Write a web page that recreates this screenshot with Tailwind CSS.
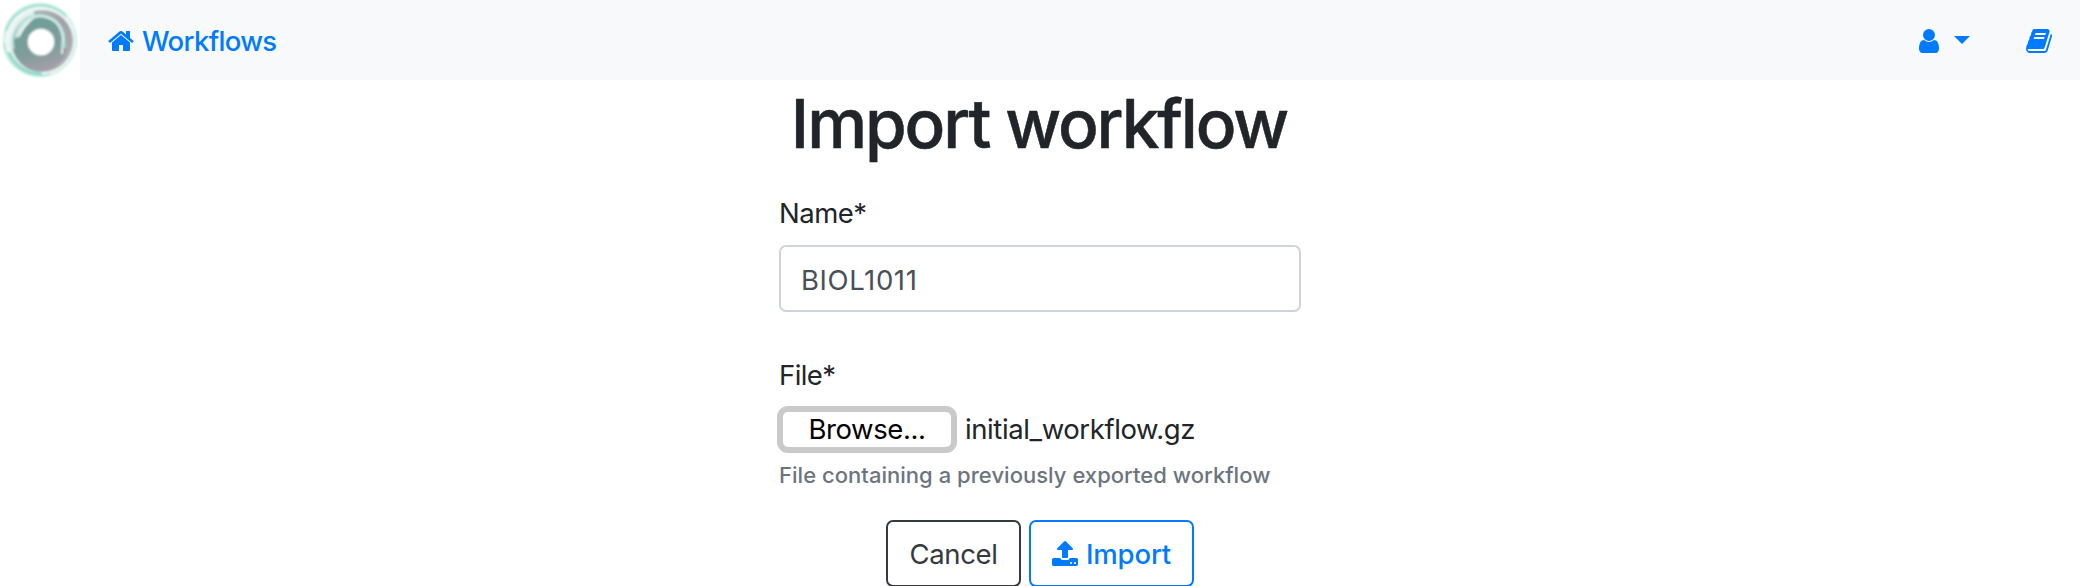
<!DOCTYPE html>
<html lang="en">
<head>
<meta charset="utf-8">
<title>Import workflow</title>
<script src="https://cdn.jsdelivr.net/npm/@tailwindcss/browser@4"></script>
</head>
<body class="h-[586px] overflow-hidden bg-white font-[Inter,sans-serif] text-[27.5px] leading-[42px] text-[#212529]">
<nav class="flex h-20 items-center bg-[#f8f9fa] text-[#007bff]">
  <a class="h-20 w-20 shrink-0 bg-white" href="#">
    <svg class="h-20 w-20" viewBox="0 0 80 80" fill="none">
      <defs>
        <linearGradient id="disc" x1="0.3" y1="0" x2="0.6" y2="1"><stop offset="0" stop-color="#6f9f99"/><stop offset=".6" stop-color="#7e9d9b"/><stop offset="1" stop-color="#a5a0a9"/></linearGradient>
        <linearGradient id="arc" x1="0" y1="0" x2="1" y2="1"><stop offset="0" stop-color="#a9c9c2"/><stop offset=".5" stop-color="#a39fa9"/><stop offset="1" stop-color="#b5b2ba"/></linearGradient>
        <filter id="soft" x="-10%" y="-10%" width="120%" height="120%"><feGaussianBlur stdDeviation=".9"/></filter>
      </defs>
      <g filter="url(#soft)">
        <circle cx="40" cy="40" r="36" fill="#f2f8f7" stroke="#d3f0e8" stroke-width="2.5"/>
        <path d="M6 31A36 36 0 0 1 66 16" stroke="#a9e2d4" stroke-width="3"/>
        <path d="M4 43A36 36 0 0 0 50 74" stroke="#b4e8db" stroke-width="2.5"/>
        <circle cx="42" cy="41" r="31" fill="url(#arc)"/>
        <path d="M11 48A31 31 0 0 1 34 13" stroke="#e3f1ee" stroke-width="4"/>
        <path d="M9 52Q18 73 42 74" stroke="#8bd9c7" stroke-width="3"/>
        <circle cx="40" cy="44.5" r="27" fill="url(#disc)"/>
        <path d="M14 49A27 27 0 0 1 40 15Q66 17 65 48" stroke="#a5dccf" stroke-width="2"/>
        <path d="M16 38Q20 19 39 16Q60 17 63 38L62 54" stroke="#d8efe9" stroke-width="2.2"/>
        <path d="M18 35Q22 22 35 18Q25 25 19 38Z" fill="#effaf7"/>
        <circle cx="41" cy="42" r="13.3" fill="#fff"/>
      </g>
    </svg>
  </a>
  <a class="flex items-center pl-[27px]" href="#">
    <svg class="h-7 w-7 translate-y-px" viewBox="0 0 1792 1792" fill="currentColor"><path d="M1472 992v480q0 26-19 45t-45 19h-384v-384h-256v384h-384q-26 0-45-19t-19-45v-480q0-1 .5-3t.5-3l575-474 575 474q1 2 1 6zm223-69l-62 74q-8 9-21 11h-3q-13 0-21-7l-692-577-692 577q-12 8-24 7-13-2-21-11l-62-74q-8-10-7-23.5t11-21.5l719-599q32-26 76-26t76 26l244 204v-195q0-14 9-23t23-9h192q14 0 23 9t9 23v408l219 182q10 8 11 21.5t-7 23.5z"/></svg>
    <span class="ml-[7px] mt-0.5 font-medium tracking-[-0.65px]">Workflows</span>
  </a>
  <div class="ml-auto flex items-center pr-[27px]">
    <a class="flex items-center gap-[11px]" href="#">
      <svg class="h-7 w-7 translate-y-px" viewBox="0 0 1792 1792" fill="currentColor"><path d="M1536 1399q0 109-62.5 187t-150.5 78h-854q-88 0-150.5-78t-62.5-187q0-85 8.5-160.5t31.5-152 58.5-131 94-89 134.5-34.5q131 128 313 128t313-128q76 0 134.5 34.5t94 89 58.5 131 31.5 152 8.5 160.5zm-256-887q0 159-112.5 271.5t-271.5 112.5-271.5-112.5-112.5-271.5 112.5-271.5 271.5-112.5 271.5 112.5 112.5 271.5z"/></svg>
      <svg class="h-2 w-4" viewBox="0 0 16 8" fill="currentColor"><path d="M0 0h16L8 8z"/></svg>
    </a>
    <a class="ml-[55px]" href="#"><svg class="h-7 w-7 translate-y-px" viewBox="0 0 1792 1792" fill="currentColor"><path d="M1703 478q40 57 18 129l-275 906q-19 64-76.5 107.5t-122.5 43.5h-923q-77 0-148.5-53.5t-99.5-131.5q-24-67-2-127 0-4 3-27t4-37q1-8-3-21.5t-3-19.5q2-11 8-21t16.5-23.5 16.5-23.5q23-38 45-91.5t30-91.5q3-10 .5-30t-.5-28q3-11 17-28t17-23q21-36 42-92t25-90q1-9-2.5-32t.5-28q4-13 22-30.5t22-22.5q19-26 42.5-84.5t27.5-96.5q1-8-3-25.5t-2-26.5q2-8 9-18t18-23 17-21q8-12 16.5-30.5t15-35 16-36 19.5-32 26.5-23.5 36-11.5 47.5 5.5l-1 3q38-9 51-9h761q74 0 114 56t18 130l-274 906q-36 119-71.5 153.5t-128.5 34.5h-869q-27 0-38 15-11 16-1 43 24 70 144 70h923q29 0 56-15.5t35-41.5l300-987q7-22 5-57 38 15 59 43zm-1064 2q-4 13 2 22.5t20 9.5h608q13 0 25.5-9.5t16.5-22.5l21-64q4-13-2-22.5t-20-9.5h-608q-13 0-25.5 9.5t-16.5 22.5zm-83 256q-4 13 2 22.5t20 9.5h608q13 0 25.5-9.5t16.5-22.5l21-64q4-13-2-22.5t-20-9.5h-608q-13 0-25.5 9.5t-16.5 22.5z"/></svg></a>
  </div>
</nav>
<main class="flex flex-col items-center">
  <h1 class="mt-0.5 h-[84px] -translate-x-px whitespace-nowrap text-[67.5px] leading-[84px] font-medium tracking-[-2.1px] [-webkit-text-stroke:0.5px_currentColor]">Import workflow</h1>
  <form class="w-[522px]">
    <label class="mt-[26px] block w-fit tracking-[-0.5px]">Name*</label>
    <div class="mt-[11px] flex h-[67px] items-center rounded-[7px] border-2 border-[#ced4da] pt-0.5 pl-5 text-[#495057]"><span class="tracking-[0.6px]">BIOL1011</span></div>
    <label class="mt-[42px] block w-fit tracking-[-0.6px]">File*</label>
    <div class="mt-2.5 flex h-[46px] items-center">
      <span class="-ml-0.5 flex h-[47px] w-[180px] items-center justify-center rounded-[11px] border-[6px] border-[#cacacb] bg-white text-black"><span class="tracking-[-0.4px]">Browse...</span></span>
      <span class="ml-2 whitespace-nowrap tracking-[-0.4px]">initial_workflow.gz</span>
    </div>
    <p class="mt-[7px] w-fit whitespace-nowrap text-[22px] leading-[33px] font-medium tracking-[0.03px] text-[#6c757d]">File containing a previously exported workflow</p>
  </form>
  <div class="mt-7 flex gap-2">
    <button class="flex h-[67px] w-[135px] items-center justify-center rounded-[7px] border-2 border-[#343a40] text-[#343a40]"><span class="tracking-[-0.4px]">Cancel</span></button>
    <button class="flex h-[67px] w-[165px] items-center justify-center gap-1.5 rounded-[7px] border-2 border-[#007bff] text-[#007bff]">
      <svg class="h-7 w-7 -translate-x-px" viewBox="0 0 1792 1792" fill="currentColor"><path d="M1344 1472q0-26-19-45t-45-19-45 19-19 45 19 45 45 19 45-19 19-45zm256 0q0-26-19-45t-45-19-45 19-19 45 19 45 45 19 45-19 19-45zm128-224v320q0 40-28 68t-68 28h-1472q-40 0-68-28t-28-68v-320q0-40 28-68t68-28h427q21 56 70.5 92t110.5 36h256q61 0 110.5-36t70.5-92h427q40 0 68 28t28 68zm-325-648q-17 40-59 40h-256v448q0 26-19 45t-45 19h-256q-26 0-45-19t-19-45v-448h-256q-42 0-59-40-17-39 14-69l448-448q18-19 45-19t45 19l448 448q31 30 14 69z"/></svg>
      <span class="font-medium tracking-[-0.15px]">Import</span>
    </button>
  </div>
</main>
</body>
</html>
